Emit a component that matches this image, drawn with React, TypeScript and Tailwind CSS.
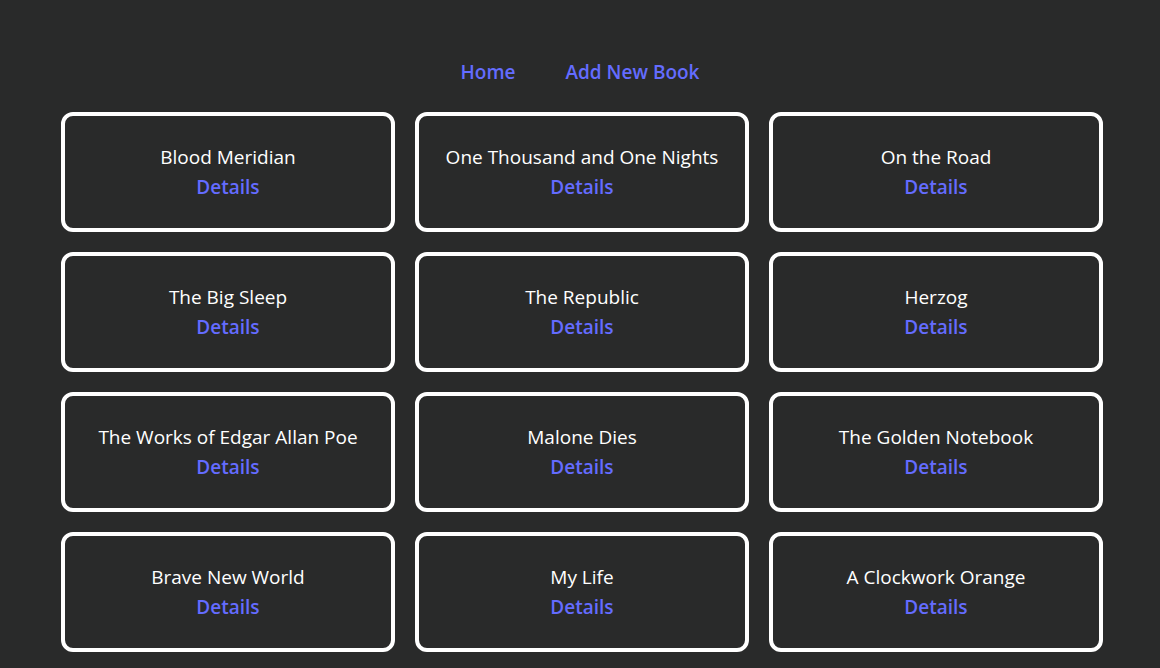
import React from 'react';

const books = [
  'Blood Meridian',
  'One Thousand and One Nights',
  'On the Road',
  'The Big Sleep',
  'The Republic',
  'Herzog',
  'The Works of Edgar Allan Poe',
  'Malone Dies',
  'The Golden Notebook',
  'Brave New World',
  'My Life',
  'A Clockwork Orange',
];

export default function App() {
  return (
    <div className="min-h-screen bg-[#292a2a] text-white font-['Open_Sans',sans-serif]">
      {/* Nav */}
      <nav className="flex justify-center gap-[50px] pt-[58px] pb-[26px]">
        <a href="#" className="text-[19px] font-semibold text-[#646cff] leading-[28px]">Home</a>
        <a href="#" className="text-[19px] font-semibold text-[#646cff] leading-[28px]">Add New Book</a>
      </nav>

      {/* Book grid */}
      <div className="grid grid-cols-3 gap-5 pl-[61px] pr-[57px]">
        {books.map((title) => (
          <div
            key={title}
            className="h-[120px] border-4 border-white rounded-xl flex flex-col items-center justify-center"
          >
            <span className="text-[19px] leading-[30px]">{title}</span>
            <a href="#" className="text-[19px] leading-[30px] font-semibold text-[#646cff]">Details</a>
          </div>
        ))}
      </div>
    </div>
  );
}
